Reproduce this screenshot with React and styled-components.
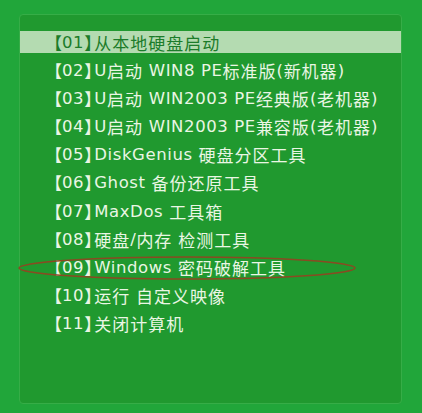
import React from "react";
import styled, { createGlobalStyle } from "styled-components";

const GlobalStyle = createGlobalStyle`
  html, body {
    margin: 0;
    padding: 0;
    background: #21a63a;
  }
`;

const Screen = styled.div`
  width: 422px;
  height: 413px;
  background: #21a63a;
  padding: 14px 0 0 19px;
  box-sizing: border-box;
  overflow: hidden;
`;

const Panel = styled.div`
  position: relative;
  width: 383px;
  height: 390px;
  box-sizing: border-box;
  background: #20992f;
  border: 1px solid #36ad47;
  border-radius: 4px;
  padding-top: 16px;
`;

const Menu = styled.ul`
  list-style: none;
  margin: 0;
  padding: 0;
  display: flex;
  flex-direction: column;
  gap: 6.2px;
`;

const Item = styled.li`
  position: relative;
  height: 22px;
  display: flex;
  align-items: center;
  padding-left: 30px;
  font-family: "Noto Sans CJK SC", "DejaVu Sans", sans-serif;
  font-size: 17px;
  letter-spacing: 1px;
  white-space: nowrap;
  color: ${(p) => (p.$active ? "#1c7c2a" : "#eaf6e4")};
  background: ${(p) => (p.$active ? "#b4dbb1" : "transparent")};
`;

const Latin = styled.span`
  font-family: "DejaVu Sans", sans-serif;
  font-size: 16.5px;
  letter-spacing: 0.6px;
  white-space: pre;
`;

// the full-width brackets are drawn tighter than the font's em box
const Bracket = styled.span`
  margin-left: ${(p) => (p.$open ? "-5px" : "0")};
  letter-spacing: ${(p) => (p.$open ? "0" : "-7px")};
`;

const Mark = styled.svg`
  position: absolute;
  left: -3px;
  top: -2px;
  pointer-events: none;
`;

const items = [
  ["01", "从本地硬盘启动"],
  ["02", "U启动 WIN8 PE标准版(新机器)"],
  ["03", "U启动 WIN2003 PE经典版(老机器)"],
  ["04", "U启动 WIN2003 PE兼容版(老机器)"],
  ["05", "DiskGenius 硬盘分区工具"],
  ["06", "Ghost 备份还原工具"],
  ["07", "MaxDos 工具箱"],
  ["08", "硬盘/内存 检测工具"],
  ["09", "Windows 密码破解工具"],
  ["10", "运行 自定义映像"],
  ["11", "关闭计算机"],
];

// wrap ascii runs so they get the latin face
function runs(label) {
  return label
    .split(/([\x20-\x7e]+)/)
    .filter(Boolean)
    .map((part, i) =>
      /^[\x20-\x7e]+$/.test(part) ? <Latin key={i}>{part}</Latin> : part
    );
}

export default function App() {
  return (
    <>
      <GlobalStyle />
      <Screen>
        <Panel>
          <Menu>
            {items.map(([no, label], i) => (
              <Item key={no} $active={i === 0}>
                <Bracket $open>【</Bracket>
                <Latin>{no}</Latin>
                <Bracket>】</Bracket>
                {runs(label)}
                {i === 8 && (
                  <Mark width="342" height="26" viewBox="0 0 342 26">
                    <ellipse
                      cx="170"
                      cy="13"
                      rx="168"
                      ry="11"
                      fill="none"
                      stroke="#8a4a22"
                      strokeWidth="1.6"
                    />
                  </Mark>
                )}
              </Item>
            ))}
          </Menu>
        </Panel>
      </Screen>
    </>
  );
}
